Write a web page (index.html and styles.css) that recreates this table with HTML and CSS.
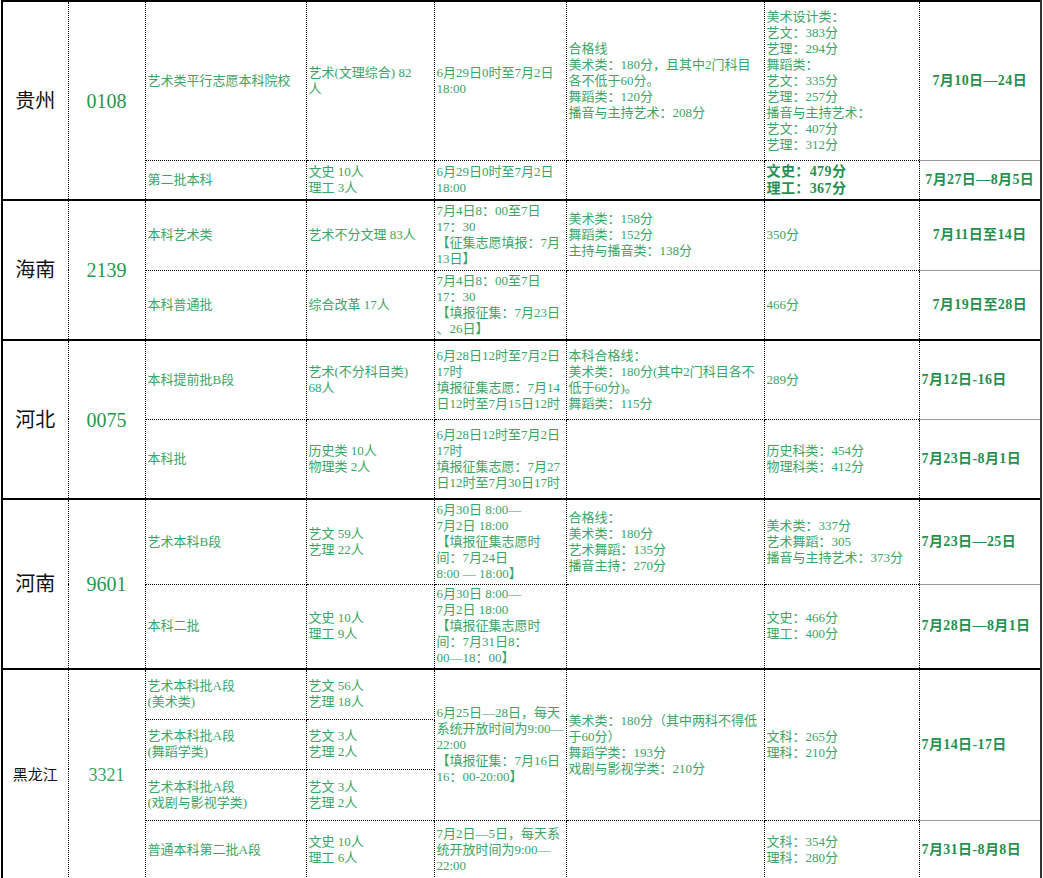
FILE: index.html
```html
<!DOCTYPE html>
<html lang="zh-CN">
<head>
<meta charset="utf-8">
<title>艺术类录取信息</title>
<link rel="stylesheet" href="styles.css">
</head>
<body>
<table class="tbl">
  <colgroup>
    <col class="c1"><col class="c2"><col class="c3"><col class="c4"><col class="c5"><col class="c6"><col class="c7"><col class="c8">
  </colgroup>
  <tbody>
    <tr class="g first h159">
      <td rowspan="2" class="prov">贵州</td>
      <td rowspan="2" class="code">0108</td>
      <td>艺术类平行志愿本科院校</td>
      <td>艺术(文理综合) 82<br>人</td>
      <td>6月29日0时至7月2日<br>18:00</td>
      <td>合格线<br>美术类：180分，且其中2门科目<br>各不低于60分。<br>舞蹈类：120分<br>播音与主持艺术：208分</td>
      <td>美术设计类：<br>艺文：383分<br>艺理：294分<br>舞蹈类：<br>艺文：335分<br>艺理：257分<br>播音与主持艺术：<br>艺文：407分<br>艺理：312分</td>
      <td class="date center">7月10日—24日</td>
    </tr>
    <tr class="h40">
      <td>第二批本科</td>
      <td>文史 10人<br>理工 3人</td>
      <td>6月29日0时至7月2日<br>18:00</td>
      <td></td>
      <td class="strong">文史：479分<br>理工：367分</td>
      <td class="date center">7月27日—8月5日</td>
    </tr>
  </tbody>
  <tbody>
    <tr class="g h70">
      <td rowspan="2" class="prov">海南</td>
      <td rowspan="2" class="code">2139</td>
      <td>本科艺术类</td>
      <td>艺术不分文理 83人</td>
      <td>7月4日8：00至7日<br>17：30<br>【征集志愿填报：7月<br>13日】</td>
      <td>美术类：158分<br>舞蹈类：152分<br>主持与播音类：138分</td>
      <td>350分</td>
      <td class="date center">7月11日至14日</td>
    </tr>
    <tr class="h70">
      <td>本科普通批</td>
      <td>综合改革 17人</td>
      <td>7月4日8：00至7日<br>17：30<br>【填报征集：7月23日<br>、26日】</td>
      <td></td>
      <td>466分</td>
      <td class="date center">7月19日至28日</td>
    </tr>
  </tbody>
  <tbody>
    <tr class="g h79">
      <td rowspan="2" class="prov">河北</td>
      <td rowspan="2" class="code">0075</td>
      <td>本科提前批B段</td>
      <td>艺术(不分科目类)<br>68人</td>
      <td>6月28日12时至7月2日<br>17时<br>填报征集志愿：7月14<br>日12时至7月15日12时</td>
      <td>本科合格线：<br>美术类：180分(其中2门科目各不<br>低于60分)。<br>舞蹈类：115分</td>
      <td>289分</td>
      <td class="date">7月12日-16日</td>
    </tr>
    <tr class="h80">
      <td>本科批</td>
      <td>历史类 10人<br>物理类 2人</td>
      <td>6月28日12时至7月2日<br>17时<br>填报征集志愿：7月27<br>日12时至7月30日17时</td>
      <td></td>
      <td>历史科类：454分<br>物理科类：412分</td>
      <td class="date">7月23日-8月1日</td>
    </tr>
  </tbody>
  <tbody>
    <tr class="g h85">
      <td rowspan="2" class="prov">河南</td>
      <td rowspan="2" class="code">9601</td>
      <td>艺术本科B段</td>
      <td>艺文 59人<br>艺理 22人</td>
      <td>6月30日 8:00—<br>7月2日 18:00<br>【填报征集志愿时<br>间：7月24日<br>8:00 — 18:00】</td>
      <td>合格线：<br>美术类：180分<br>艺术舞蹈：135分<br>播音主持：270分</td>
      <td>美术类：337分<br>艺术舞蹈：305<br>播音与主持艺术：373分</td>
      <td class="date">7月23日—25日</td>
    </tr>
    <tr class="h85">
      <td>本科二批</td>
      <td>文史 10人<br>理工 9人</td>
      <td>6月30日 8:00—<br>7月2日 18:00<br>【填报征集志愿时<br>间：7月31日8：<br>00—18：00】</td>
      <td></td>
      <td>文史：466分<br>理工：400分</td>
      <td class="date">7月28日—8月1日</td>
    </tr>
  </tbody>
  <tbody>
    <tr class="g h50">
      <td rowspan="4" class="prov small">黑龙江</td>
      <td rowspan="4" class="code light">3321</td>
      <td>艺术本科批A段<br>(美术类)</td>
      <td>艺文 56人<br>艺理 18人</td>
      <td rowspan="3">6月25日—28日，每天<br>系统开放时间为9:00—<br>22:00<br>【填报征集：7月16日<br>16：00-20:00】</td>
      <td rowspan="3">美术类：180分（其中两科不得低<br>于60分）<br>舞蹈学类：193分<br>戏剧与影视学类：210分</td>
      <td rowspan="3">文科：265分<br>理科：210分</td>
      <td rowspan="3" class="date">7月14日-17日</td>
    </tr>
    <tr class="h50">
      <td>艺术本科批A段<br>(舞蹈学类)</td>
      <td>艺文 3人<br>艺理 2人</td>
    </tr>
    <tr class="h51">
      <td>艺术本科批A段<br>(戏剧与影视学类)</td>
      <td>艺文 3人<br>艺理 2人</td>
    </tr>
    <tr class="h60">
      <td>普通本科第二批A段</td>
      <td>文史 10人<br>理工 6人</td>
      <td>7月2日—5日，每天系<br>统开放时间为9:00—<br>22:00</td>
      <td></td>
      <td>文科：354分<br>理科：280分</td>
      <td class="date">7月31日-8月8日</td>
    </tr>
  </tbody>
</table>
</body>
</html>
```

FILE: styles.css
```css
html, body {
  margin: 0;
  padding: 0;
  background: #ffffff;
}

body {
  font-family: "Liberation Serif", "Noto Sans CJK SC", serif;
  font-size: 13px;
  line-height: 16px;
  color: #3aa565;
}

.tbl {
  margin: 0 0 0 1px;
  border-collapse: collapse;
  table-layout: fixed;
  width: 1040px;
  border: 2px solid #000;
  border-right: 2px solid #333;
}

.c1 { width: 66px; }
.c2 { width: 77px; }
.c3 { width: 161px; }
.c4 { width: 128px; }
.c5 { width: 132px; }
.c6 { width: 198px; }
.c7 { width: 155px; }
.c8 { width: 122px; }

.tbl td {
  border: 1px dotted #000;
  padding: 0 2px;
  vertical-align: middle;
  text-align: left;
  white-space: nowrap;
  overflow: hidden;
}

.tbl td.date {
  border-top: 1px solid #999;
  border-bottom: 1px solid #999;
  border-right: 2px solid #333;
}

.tbl tr.g td {
  border-top: 2px solid #000;
}

.h159 { height: 159px; }
.h40 { height: 40px; }
.h70 { height: 70px; }
.h79 { height: 79px; }
.h80 { height: 80px; }
.h85 { height: 85px; }
.h50 { height: 50px; }
.h51 { height: 51px; }
.h60 { height: 60px; }

.tbl td.prov {
  text-align: center;
  color: #111;
  font-size: 20px;
  line-height: 24px;
  padding: 0;
}

.tbl td.prov.small {
  font-size: 15px;
  line-height: 18px;
}

.tbl td.code {
  text-align: center;
  color: #22994f;
  font-size: 20px;
  line-height: 24px;
  padding: 0;
}

.tbl td.code.light {
  font-size: 18px;
  color: #3aa565;
}

.tbl td.date {
  font-weight: bold;
  font-size: 14px;
  letter-spacing: 0.4px;
  color: #24914f;
}

.tbl td.center {
  text-align: center;
}

.tbl td.strong {
  font-weight: bold;
  font-size: 14px;
  letter-spacing: 0.4px;
  color: #24914f;
  line-height: 17px;
}
```
